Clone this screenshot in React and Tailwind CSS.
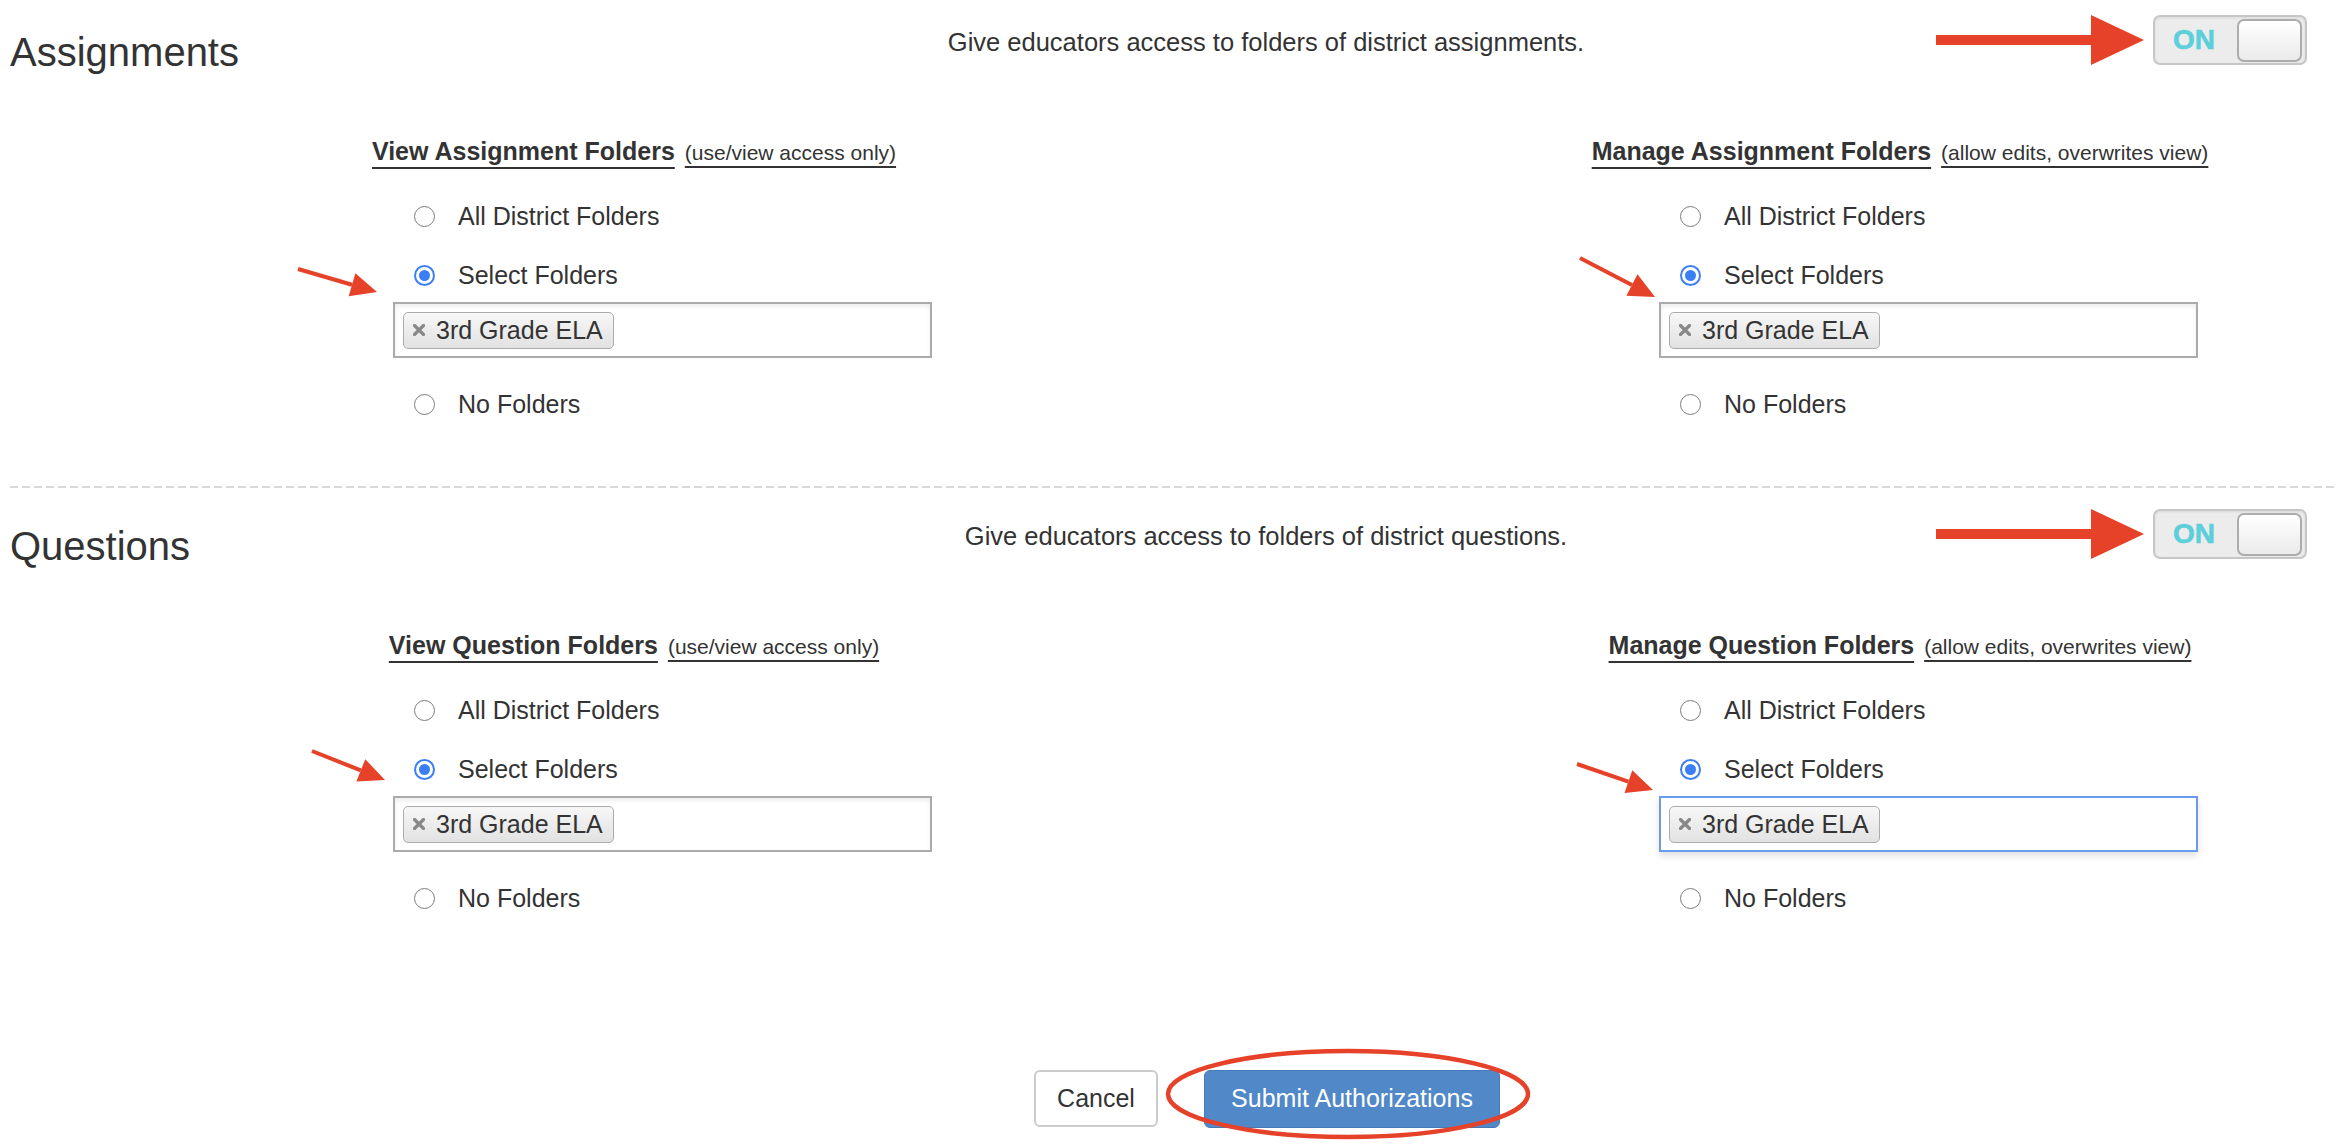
import React from "react";

const annotations = [
    [298, 269, 377, 292],
    [1580, 258, 1655, 297],
    [312, 751, 385, 780],
    [1577, 764, 1653, 790],
];

function headPoints(x1, y1, x2, y2) {
    const a = Math.atan2(y2 - y1, x2 - x1);
    const L = 26;
    const W = 12;
    const bx = x2 - L * Math.cos(a);
    const by = y2 - L * Math.sin(a);
    return {
        bx,
        by,
        pts: `${x2},${y2} ${bx + W * Math.sin(a)},${by - W * Math.cos(a)} ${bx - W * Math.sin(a)},${by + W * Math.cos(a)}`,
    };
}

function Radio({ checked }) {
    if (checked) {
        return (
            <span className="flex h-[21px] w-[21px] shrink-0 items-center justify-center rounded-full border-2 border-[#3b7ff5] bg-white">
                <span className="h-[11px] w-[11px] rounded-full bg-[#3b7ff5]" />
            </span>
        );
    }
    return <span className="h-[21px] w-[21px] shrink-0 rounded-full border-[1.5px] border-[#7c7c7c] bg-white" />;
}

function Option({ label, checked }) {
    return (
        <div className="flex h-[36px] items-center pl-[21px]">
            <Radio checked={checked} />
            <span className="ml-[23px] text-[25px] leading-[36px]">{label}</span>
        </div>
    );
}

function Tag() {
    return (
        <div className="flex h-[37px] items-center rounded-[5px] border-[1.5px] border-[#acacac] bg-linear-to-b from-[#f7f7f7] to-[#e2e2e2] pl-[9px] pr-[10px]">
            <svg width="12" height="12" viewBox="0 0 12 12">
                <path d="M1.5 1.5 L10.5 10.5 M10.5 1.5 L1.5 10.5" stroke="#888888" strokeWidth="3.2" strokeLinecap="round" />
            </svg>
            <span className="ml-[11px] text-[25px] leading-none">3rd Grade ELA</span>
        </div>
    );
}

function FolderColumn({ title, note, focused }) {
    return (
        <div className="w-[614px] shrink-0">
            <div className="flex h-[32px] items-baseline justify-center whitespace-nowrap leading-[32px]">
                <span className="shrink-0 text-[25px] font-bold underline decoration-[1.5px] underline-offset-[7px]">{title}</span>
                <span className="ml-[10px] shrink-0 text-[21px] underline decoration-[1.5px] underline-offset-[6px]">{note}</span>
            </div>
            <div className="pl-[66px]">
                <div className="mt-[31px]">
                    <Option label="All District Folders" />
                </div>
                <div className="mt-[23px]">
                    <Option label="Select Folders" checked />
                </div>
                <div
                    className={
                        focused
                            ? "mt-[9px] flex h-[56px] w-[539px] items-center border-2 border-[#6b9cec] bg-white pl-[8px] shadow-[0_4px_7px_rgba(0,0,0,0.12)]"
                            : "mt-[9px] flex h-[56px] w-[539px] items-center border-2 border-[#ababab] bg-white pl-[8px] shadow-[inset_0_3px_4px_rgba(0,0,0,0.07)]"
                    }
                >
                    <Tag />
                </div>
                <div className="mt-[28px]">
                    <Option label="No Folders" />
                </div>
            </div>
        </div>
    );
}

function BigArrow() {
    return (
        <svg width="208" height="50" viewBox="0 0 208 50" className="shrink-0">
            <rect x="0" y="20" width="158" height="10" fill="#e64129" />
            <polygon points="155,0 208,25 155,50" fill="#e64129" />
        </svg>
    );
}

function Toggle() {
    return (
        <div className="flex h-[50px] w-[154px] shrink-0 items-center justify-between rounded-[7px] border-2 border-[#c6c6c6] bg-[#ececec] pl-[18px] pr-[3px] shadow-[inset_0_1px_3px_rgba(0,0,0,0.08)]">
            <span className="text-[28px] font-bold leading-none text-[#5ccfdb] [-webkit-text-stroke:0.6px_#5ccfdb]">ON</span>
            <span className="h-[43px] w-[65px] rounded-[7px] border-2 border-[#acacac] bg-linear-to-b from-white to-[#ebebeb]" />
        </div>
    );
}

function Section({ heading, description, view, manage, focused }) {
    return (
        <div>
            <div className="flex h-[74px] items-start">
                <div className="w-[866px] shrink-0 pl-[10px] pt-[30px] text-[40px] leading-[44px]">{heading}</div>
                <div className="w-[800px] shrink-0 pt-[24px] text-center text-[25.5px] leading-[36px]">{description}</div>
                <div className="flex flex-1 items-center justify-end gap-[9px] pr-[33px] pt-[15px]">
                    <BigArrow />
                    <Toggle />
                </div>
            </div>
            <div className="ml-[327px] mt-[61px] flex gap-[652px]">
                <FolderColumn title={view[0]} note={view[1]} />
                <FolderColumn title={manage[0]} note={manage[1]} focused={focused} />
            </div>
        </div>
    );
}

export default function App() {
    return (
        <div className="relative h-[1146px] w-[2340px] overflow-hidden bg-white font-['Liberation_Sans',Arial,sans-serif] text-[#333]">
            <Section
                heading="Assignments"
                description="Give educators access to folders of district assignments."
                view={["View Assignment Folders", "(use/view access only)"]}
                manage={["Manage Assignment Folders", "(allow edits, overwrites view)"]}
            />

            <div className="ml-[10px] mr-[5px] mt-[64px] h-[2px] bg-[repeating-linear-gradient(90deg,#d8d8d8_0px,#d8d8d8_8px,transparent_8px,transparent_12px)]" />

            <div className="pt-[6px]">
                <Section
                    heading="Questions"
                    description="Give educators access to folders of district questions."
                    view={["View Question Folders", "(use/view access only)"]}
                    manage={["Manage Question Folders", "(allow edits, overwrites view)"]}
                    focused
                />
            </div>

            <div className="ml-[327px] mt-[154px] flex w-[1880px] justify-center gap-[46px]">
                <button className="h-[57px] w-[124px] rounded-[6px] border-2 border-[#cccccc] bg-white text-[25px] text-[#333]">
                    Cancel
                </button>
                <button className="h-[58px] w-[296px] rounded-[6px] border border-[#4679b9] bg-[#5088c8] text-[25px] text-white">
                    Submit Authorizations
                </button>
            </div>

            {/* red annotation marks laid over the form */}
            <svg className="pointer-events-none absolute left-0 top-0" width="2340" height="1146" viewBox="0 0 2340 1146">
                {annotations.map(([x1, y1, x2, y2], i) => {
                    const h = headPoints(x1, y1, x2, y2);
                    return (
                        <g key={i}>
                            <line x1={x1} y1={y1} x2={h.bx} y2={h.by} stroke="#e64129" strokeWidth="4" />
                            <polygon points={h.pts} fill="#e64129" />
                        </g>
                    );
                })}
                <ellipse cx="1348" cy="1094" rx="180" ry="43" fill="none" stroke="#e64129" strokeWidth="4.5" />
            </svg>
        </div>
    );
}
